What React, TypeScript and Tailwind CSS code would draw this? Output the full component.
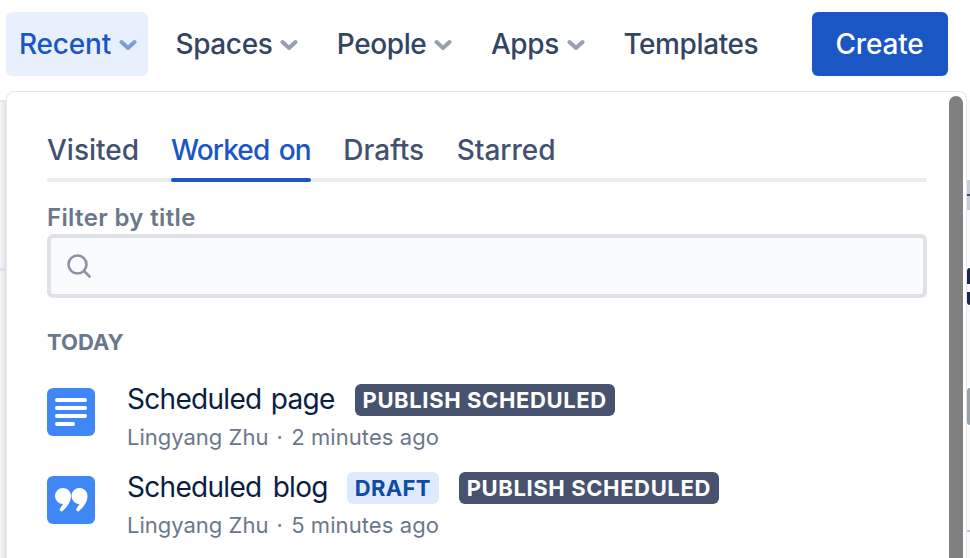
import React from "react";

const font = { fontFamily: "Inter, 'Liberation Sans', sans-serif" };

function Chevron({ color }: { color: string }) {
  return (
    <svg width="18" height="14" viewBox="0 0 18 14" className="ml-[8px] mt-[1px] shrink-0" aria-hidden="true">
      <path d="M2.5 4 L9 10 L15.5 4" fill="none" stroke={color} strokeWidth="4" strokeLinecap="round" strokeLinejoin="round" />
    </svg>
  );
}

function NavItem({ label, menu = true }: { label: string; menu?: boolean }) {
  return (
    <div className="h-[64px] flex items-center text-[28px] font-medium tracking-[-0.4px] text-[#344563]">
      <span>{label}</span>
      {menu && <Chevron color="#97a0af" />}
    </div>
  );
}

function Tab({ label, active = false }: { label: string; active?: boolean }) {
  return (
    <div className={`relative z-10 h-[52px] pt-[3px] text-[28px] leading-[34px] font-medium ${active ? "text-[#1a56c4] tracking-[-0.9px] [word-spacing:3px]" : "text-[#42526e]"}`}>
      {label}
      {active && <div className="absolute left-0 right-0 bottom-0 h-[4px] rounded-[2px] bg-[#1a56c4]" />}
    </div>
  );
}

function Badge({ label, light = false }: { label: string; light?: boolean }) {
  return (
    <span className={`h-[32px] px-[8px] rounded-[6px] flex items-center text-[22px] font-bold ${light ? "bg-[#deebff] text-[#0f4aa3] tracking-[0.3px]" : "bg-[#47536e] text-white tracking-[0.62px]"}`}>
      {label}
    </span>
  );
}

function PageIcon() {
  return (
    <svg width="48" height="48" viewBox="0 0 48 48" className="shrink-0" aria-hidden="true">
      <rect width="48" height="48" rx="6" fill="#3f87f5" />
      <g stroke="#fff" strokeWidth="4" strokeLinecap="round">
        <path d="M10 12 H38" />
        <path d="M10 20 H38" />
        <path d="M10 28 H38" />
        <path d="M10 36 H26" />
      </g>
    </svg>
  );
}

function BlogIcon() {
  const d = "M16 12a8 8 0 0 1 8 8c0 6-4 11-8 14.5a1.8 1.8 0 0 1-3-2l3-4.5a8 8 0 0 1-8-8a8 8 0 0 1 8-8z";
  return (
    <svg width="48" height="48" viewBox="0 0 48 48" className="shrink-0" aria-hidden="true">
      <rect width="48" height="48" rx="6" fill="#3f87f5" />
      <path d={d} fill="#fff" />
      <path d={d} fill="#fff" transform="translate(16.5 0)" />
    </svg>
  );
}

function Row({ icon, title, who, when, badges, titleClass }: { icon: React.ReactNode; title: string; who: string; when: string; badges: React.ReactNode; titleClass: string }) {
  return (
    <div className="flex h-[88px] items-start">
      <div className="pt-[4px] w-[80px] shrink-0">{icon}</div>
      <div className="flex flex-col">
        <div className="flex items-center h-[32px]">
          <span className={`text-[28px] text-[#091e42] pb-[2px] tracking-[-0.7px] ${titleClass}`}>{title}</span>
          {badges}
        </div>
        <div className="mt-[8px] text-[22px] leading-[26px] text-[#6b778c]">
          {who}
          <span className="mx-[2px]"> · </span>
          <span className="tracking-[0.08px]">{when}</span>
        </div>
      </div>
    </div>
  );
}

export default function App() {
  return (
    <div style={font} className="w-[970px] h-[558px] overflow-hidden bg-white flex flex-col">
      <div className="h-[91px] shrink-0 pt-[12px] pl-[6px] flex items-start">
        <div className="h-[64px] w-[142px] rounded-[6px] bg-[#e8f0fe] flex items-center pl-[13px] text-[28px] font-medium tracking-[-0.2px] text-[#1a56c4]">
          <span>Recent</span>
          <Chevron color="#7aa0e0" />
        </div>
        <div className="ml-[27.5px] flex gap-[38.5px]">
          <NavItem label="Spaces" />
          <NavItem label="People" />
          <NavItem label="Apps" />
          <NavItem label="Templates" menu={false} />
        </div>
        <div className="ml-auto mr-[22px] h-[64px] w-[136px] pr-[1px] rounded-[6px] bg-[#1a56c4] flex items-center justify-center text-[28px] font-medium tracking-[-0.2px] text-white">
          Create
        </div>
      </div>
      <div className="flex-1 flex min-h-0">
        <div className="w-[6px] mt-[9px] flex flex-col bg-gradient-to-r from-[#f4f5f7] to-[#e4e6ea] border-r border-[#dfe1e6]">
          <div className="h-[2px] bg-[#e4e6ea]" />
          <div className="h-[166px]" />
          <div className="h-[3px] bg-[#dfe1e6]" />
        </div>
        <div className="flex-1 flex min-w-0 bg-white rounded-t-[8px] border border-b-0 border-[#e6e8ec] pl-[40px] pr-[3px]">
          <div className="flex-1 min-w-0 pr-[22px] pt-[38px]">
            <div className="flex gap-[32px] h-[52px] relative after:absolute after:left-0 after:right-0 after:bottom-0 after:h-[4px] after:rounded-[2px] after:bg-[#ebecf0]">
              <Tab label="Visited" />
              <Tab label="Worked on" active />
              <div className="ml-[0.5px]"><Tab label="Drafts" /></div>
              <div className="ml-[0.5px]"><Tab label="Starred" /></div>
            </div>
            <div className="mt-[22px] text-[24px] leading-[28px] font-semibold tracking-[0.35px] text-[#6b778c]">Filter by title</div>
            <div className="mt-[2px] h-[64px] rounded-[6px] border-[4px] border-[#dfe1e6] bg-[#fafbfc] flex items-center pl-[16px]">
              <svg width="26" height="26" viewBox="0 0 26 26" aria-hidden="true" className="mt-[1px]">
                <circle cx="10.5" cy="10.5" r="9" fill="none" stroke="#8993a4" strokeWidth="2.6" />
                <path d="M17 17 L22.5 22.5" stroke="#8993a4" strokeWidth="2.6" strokeLinecap="round" />
              </svg>
            </div>
            <div className="mt-[31px] text-[22px] leading-[26px] font-bold text-[#6b778c]">TODAY</div>
            <div className="mt-[29px]">
              <Row icon={<PageIcon />} title="Scheduled page" who="Lingyang Zhu" when="2 minutes ago" titleClass="mr-[20px] [word-spacing:2px]" badges={<Badge label="PUBLISH SCHEDULED" />} />
              <Row
                icon={<BlogIcon />}
                title="Scheduled blog"
                who="Lingyang Zhu"
                when="5 minutes ago"
                titleClass="mr-[19px] [word-spacing:4px]"
                badges={
                  <div className="flex gap-[20px]">
                    <Badge label="DRAFT" light />
                    <Badge label="PUBLISH SCHEDULED" />
                  </div>
                }
              />
            </div>
          </div>
          <div className="w-[14px] mt-[4px] shrink-0 rounded-t-[7px] bg-[#808080]" />
        </div>
        <div className="w-[3px] mt-[9px] flex flex-col bg-[#f9f9fb]">
          <div className="h-[80px]" />
          <div className="h-[30px] bg-[#c8ccd6] flex items-center">
            <div className="w-full h-[2px] bg-[#42526e]" />
          </div>
          <div className="h-[58px]" />
          <div className="h-[16px] bg-[#172b4d] rounded-tl-[3px]" />
          <div className="h-[8px]" />
          <div className="h-[13px] bg-[#172b4d] rounded-bl-[3px]" />
          <div className="h-[83px]" />
          <div className="h-[37px] bg-[#9aa0a8] rounded-l-full" />
          <div className="h-[105px]" />
          <div className="h-[2px] bg-[#c1c7d0]" />
        </div>
      </div>
    </div>
  );
}
